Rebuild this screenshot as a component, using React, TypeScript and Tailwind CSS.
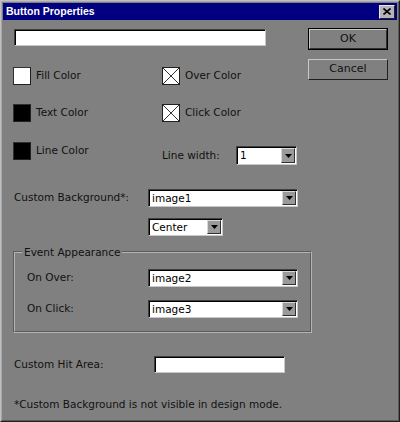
import React from 'react';

const font = { fontFamily: '"DejaVu Sans", Verdana, sans-serif' };

const Swatch = ({ color }: { color: 'white' | 'black' }) => (
  <div
    className={
      'w-[18px] h-[18px] border border-t-[#303030] border-l-[#303030] border-r-[#202020] border-b-[#202020] ' +
      (color === 'white' ? 'bg-white' : 'bg-black')
    }
  />
);

const Crossed = () => (
  <div className="w-[18px] h-[18px] bg-white border border-[#202020]">
    <svg width="16" height="16" viewBox="0 0 16 16">
      <line x1="0" y1="0" x2="16" y2="16" stroke="#333" strokeWidth="1" />
      <line x1="16" y1="0" x2="0" y2="16" stroke="#333" strokeWidth="1" />
    </svg>
  </div>
);

const Select = ({ value, w, h = 18 }: { value: string; w: string; h?: number }) => (
  <div
    className={
      'flex items-stretch bg-white border border-t-[#404040] border-l-[#404040] border-r-[#c8c8c8] border-b-[#c8c8c8] shadow-[inset_1px_1px_0_#000] ' +
      w
    }
    style={{ height: h }}
  >
    <div className="flex-1 pl-[3px] pt-[1px] text-[10.5px] leading-[15px] text-black">{value}</div>
    <div className="w-[14px] my-[1px] mr-[1px] bg-[#9a9a9a] border border-t-[#d8d8d8] border-l-[#d8d8d8] border-r-[#303030] border-b-[#303030] flex items-center justify-center">
      <svg width="7" height="4" viewBox="0 0 7 4">
        <polygon points="0,0 7,0 3.5,4" fill="#000" />
      </svg>
    </div>
  </div>
);

const TextBox = ({ w }: { w: string }) => (
  <div
    className={
      'h-[17px] bg-white border border-t-[#404040] border-l-[#404040] border-r-[#c8c8c8] border-b-[#c8c8c8] shadow-[inset_1px_1px_0_#000] ' +
      w
    }
  />
);

export default function App() {
  return (
    <div
      className="w-[400px] h-[422px] bg-[#808080] border border-t-[#c0c0c0] border-l-[#c0c0c0] border-r-[#202020] border-b-[#202020] text-[10.5px] text-[#111]"
      style={font}
    >
      <div className="border border-t-[#a8a8a8] border-l-[#a8a8a8] border-r-[#5a5a5a] border-b-[#5a5a5a] h-full flex flex-col">
        {/* title bar */}
        <div className="mx-[1px] mt-[1px] h-[17px] bg-[#000080] flex items-center justify-between pl-[3px] pr-[2px]">
          <span
            className="text-white font-bold text-[10.5px]"
            style={{ fontFamily: '"Liberation Sans", Arial, sans-serif' }}
          >
            Button Properties
          </span>
          <div className="w-[16px] h-[14px] bg-[#b4b4b4] border border-t-[#e8e8e8] border-l-[#e8e8e8] border-r-[#202020] border-b-[#202020] flex items-center justify-center">
            <svg width="8" height="7" viewBox="0 0 8 7">
              <path d="M0.5 0.5 L7.5 6.5 M7.5 0.5 L0.5 6.5" stroke="#000" strokeWidth="1.6" />
            </svg>
          </div>
        </div>

        {/* top area */}
        <div className="flex">
          <div className="pl-[11px] w-[297px]">
            <div className="mt-[9px] ml-[1px]">
              <TextBox w="w-[252px]" />
            </div>

            <div className="flex mt-[21px]">
              <div className="w-[149px] flex flex-col">
                <div className="flex items-center gap-[5px]">
                  <Swatch color="white" />
                  <span>Fill Color</span>
                </div>
                <div className="flex items-center gap-[5px] mt-[19px]">
                  <Swatch color="black" />
                  <span>Text Color</span>
                </div>
                <div className="flex items-center gap-[5px] mt-[20px]">
                  <Swatch color="black" />
                  <span>Line Color</span>
                </div>
              </div>
              <div className="flex flex-col">
                <div className="flex items-center gap-[5px]">
                  <Crossed />
                  <span>Over Color</span>
                </div>
                <div className="flex items-center gap-[5px] mt-[19px]">
                  <Crossed />
                  <span>Click Color</span>
                </div>
                <div className="flex items-center mt-[24px]">
                  <span className="w-[74px]">Line width:</span>
                  <Select value="1" w="w-[61px]" h={19} />
                </div>
              </div>
            </div>
          </div>

          <div className="ml-[9px] mt-[8px] flex flex-col gap-[9px]">
            <div className="w-[80px] h-[22px] border border-black">
              <div className="h-full border border-t-[#c8c8c8] border-l-[#c8c8c8] border-r-[#303030] border-b-[#303030] flex items-center justify-center text-[11px]">
                OK
              </div>
            </div>
            <div className="w-[80px] h-[21px] border border-t-[#c8c8c8] border-l-[#c8c8c8] border-r-[#202020] border-b-[#202020] flex items-center justify-center text-[11px]">
              Cancel
            </div>
          </div>
        </div>

        {/* custom background */}
        <div className="flex items-center pl-[12px] mt-[24px]">
          <span className="w-[134px]">Custom Background*:</span>
          <Select value="image1" w="w-[150px]" />
        </div>
        <div className="pl-[146px] mt-[11px]">
          <Select value="Center" w="w-[75px]" />
        </div>

        {/* group box */}
        <div className="ml-[11px] w-[299px] mt-[15px] border border-t-[#5c5c5c] border-l-[#5c5c5c] border-r-[#b4b4b4] border-b-[#b4b4b4]">
          <div className="border border-t-[#b4b4b4] border-l-[#b4b4b4] border-r-[#5c5c5c] border-b-[#5c5c5c] h-[80px] relative">
            <span className="absolute -top-[8px] left-[7px] bg-[#808080] px-[2px]">
              Event Appearance
            </span>
            <div className="flex items-center pl-[12px] mt-[16px]">
              <span className="w-[121px]">On Over:</span>
              <Select value="image2" w="w-[150px]" />
            </div>
            <div className="flex items-center pl-[12px] mt-[13px]">
              <span className="w-[121px]">On Click:</span>
              <Select value="image3" w="w-[150px]" />
            </div>
          </div>
        </div>

        {/* hit area */}
        <div className="flex items-center pl-[12px] mt-[23px]">
          <span className="w-[140px]">Custom Hit Area:</span>
          <TextBox w="w-[131px]" />
        </div>

        <div className="pl-[12px] mt-[24px]">*Custom Background is not visible in design mode.</div>
      </div>
    </div>
  );
}
